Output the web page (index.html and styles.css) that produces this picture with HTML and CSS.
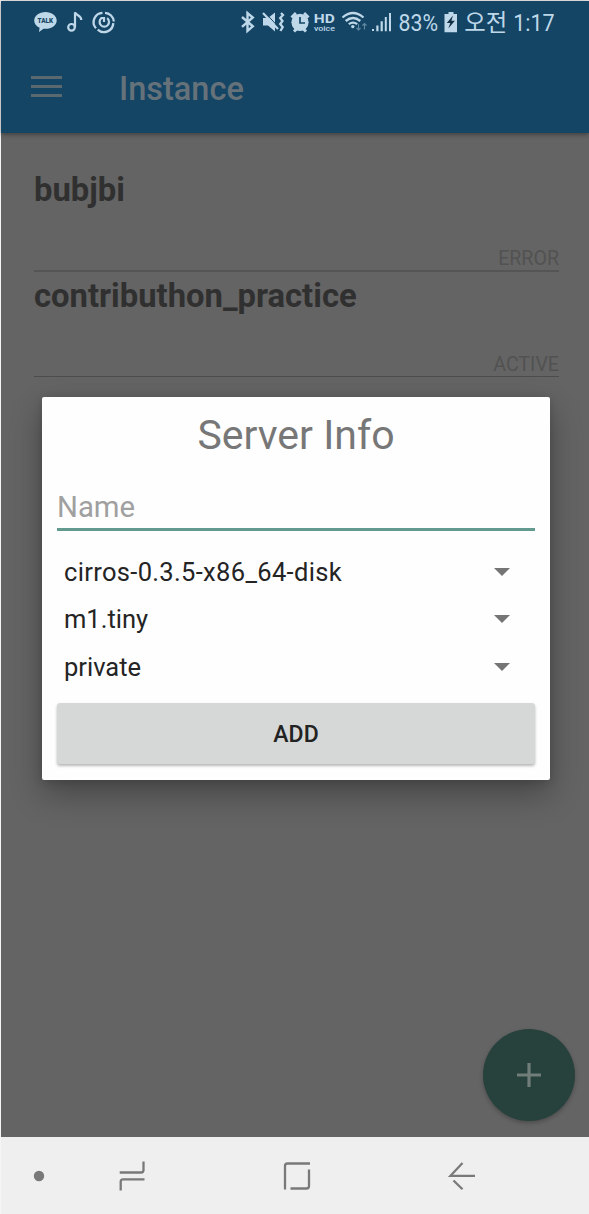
FILE: index.html
```
<!DOCTYPE html>
<html lang="ko">
<head>
<meta charset="utf-8">
<title>Instance</title>
<link rel="stylesheet" href="styles.css">
</head>
<body>
<div class="phone">
  <header class="top">
    <div class="status">
      <svg class="si talk" width="24" height="24" viewBox="34 10 24 24"><path fill="currentColor" d="M45.500 12c6.200 0 11.200 3.700 11.200 8.500s-5 8.300-11.200 8.300c-.6 0-1.300 0-2 -.1l-4.500 3.400.6-4.300c-3.300-1.500-5.400-4.200-5.400-7.300 0-4.800 5-8.500 11.300-8.500z"/><text class="talk-text" x="37.600" y="23.200" textLength="15.500" lengthAdjust="spacingAndGlyphs">TALK</text></svg>
      <svg class="si note" width="18" height="24" viewBox="66 10 18 24"><g fill="none" stroke="currentColor" stroke-width="2.200"><circle cx="71.500" cy="27.300" r="3.300"/><path d="M75 27.300V12.300c1 3.200 6.500 3.200 6.300 7.700"/></g></svg>
      <svg class="si ring" width="24" height="24" viewBox="92 10 24 24"><g fill="none" stroke="currentColor"><path stroke-width="2.300" d="M102.500 12.800a9.300 9.300 0 0 0-6.500 15.500M97.700 29.600a9.300 9.300 0 0 0 15.600-6.500M113.800 21.500a9.300 9.300 0 0 0-8.800-8.700"/><path stroke-width="2.200" d="M101.500 18.200a4.700 4.700 0 1 0 5.600 0M100.500 18h3.500v4"/></g></svg>
      <span class="grow"></span>
      <svg class="si bt" width="16" height="24" viewBox="240 10 16 24"><path fill="none" stroke="currentColor" stroke-width="2.400" d="M242 17l10.800 9.300-5.300 4.600V13l5.300 4.500L242 26.800"/></svg>
      <svg class="si mute" width="24" height="24" viewBox="261 10 24 24"><path fill="currentColor" d="M263 18h5l7-5.500v19l-7-6h-5z"/><path stroke="#154565" stroke-width="1" d="M265 12.500l13 14"/><path stroke="currentColor" stroke-width="2.200" d="M263 13l15 16"/><path fill="none" stroke="currentColor" stroke-width="2.300" d="M281 13l2 2-2.800 3 2.300 3-2.300 3 2.500 3-2.300 4"/></svg>
      <svg class="si alarm" width="22" height="24" viewBox="289 10 22 24"><circle cx="300" cy="22.300" r="8.600" fill="currentColor"/><path fill="none" stroke="currentColor" stroke-width="3" d="M291.500 17.500l4.500-4.300M308.500 17.500l-4.500-4.300M294 31.500l3-3M306 31.500l-3-3"/><path fill="none" stroke="#154565" stroke-width="1.700" d="M300 17v6h5"/></svg>
      <svg class="si hd" width="23" height="24" viewBox="313 10 23 24"><text class="hd-text" x="313.800" y="22.700" textLength="21" lengthAdjust="spacingAndGlyphs">HD</text><text class="voice-text" x="314" y="31" textLength="21" lengthAdjust="spacingAndGlyphs">voice</text></svg>
      <svg class="si wifi" width="27" height="24" viewBox="341 10 27 24"><g fill="none" stroke="currentColor" stroke-width="2.300"><path d="M342.500 17.500q10.500-9 21 0M345.700 21q7.300-6 14.600 0M348.800 24.200q4.200-3.200 8.400 0"/></g><circle cx="352.800" cy="26.600" r="1.700" fill="currentColor"/><g class="dim" fill="none" stroke="currentColor" stroke-width="1.200"><path d="M358.500 24v6M356.500 28l2 2 2-2M364.500 29.500v-6M362.500 25.500l2-2 2 2"/></g></svg>
      <svg class="si signal" width="22" height="24" viewBox="371 10 22 24"><path fill="currentColor" d="M372 29h2v2h-2zM376.300 25.500h2.200v5.700h-2.200zM380.600 21.300h2.200v9.900h-2.200zM384.800 17h2v14.200h-2zM389 13h2v18.200h-2z"/></svg>
      <svg class="si pct" width="42" height="24" viewBox="398 10 42 24"><text class="st" x="398.500" y="31" textLength="39.500" lengthAdjust="spacingAndGlyphs">83%</text></svg>
      <svg class="si batt" width="14" height="24" viewBox="444 10 14 24"><path fill="currentColor" d="M448.500 12h5v2h3.500v18.300h-12.500V14h4z"/><path fill="#102f45" d="M453 15.500l-6.200 7.500h3.500l-2 5.500 6.600-7.700h-3.500z"/></svg>
      <svg class="si ampm" width="44" height="28" viewBox="464 8 44 28"><text class="st ko" x="464.300" y="30.700" textLength="43" lengthAdjust="spacingAndGlyphs">오전</text></svg>
      <svg class="si time" width="43" height="24" viewBox="513 10 43 24"><text class="st" x="513.200" y="31" textLength="41.500" lengthAdjust="spacingAndGlyphs">1:17</text></svg>
    </div>
    <div class="toolbar">
      <div class="menu"><i></i><i></i><i></i></div>
      <h1>Instance</h1>
    </div>
  </header>
  <main class="content">
    <section class="server">
      <h2>bubjbi</h2>
      <p>ERROR</p>
    </section>
    <section class="server">
      <h2>contributhon_practice</h2>
      <p>ACTIVE</p>
    </section>
    <div class="fab"><svg width="26" height="26" viewBox="0 0 26 26"><path stroke="#707d78" stroke-width="3.200" d="M13 1v24M1 13h24"/></svg></div>
  </main>
  <div class="dialog">
    <div class="dtitle"><span>Server Info</span></div>
    <div class="field">Name</div>
    <div class="row"><span class="image-name">cirros-0.3.5-x86_64-disk</span><i class="arrow"></i></div>
    <div class="row"><span>m1.tiny</span><i class="arrow"></i></div>
    <div class="row"><span>private</span><i class="arrow"></i></div>
    <div class="add"><span>ADD</span></div>
  </div>
  <nav class="nav">
    <svg width="588" height="77" viewBox="1 1137 588 77"><circle cx="39" cy="1176" r="5.200" fill="#797979"/><g fill="none" stroke="#797979" stroke-width="2.300"><path d="M119.700 1172.500H141q2.500 0 2.500-2.500v-8.500M144.500 1179.300H123q-2.300 0-2.300 2.500v8.700M310 1163.500h-22.500q-2.500 0-2.500 2.500v23.500M309 1169.500v16.500q0 2.500-2.500 2.500H290.500M475 1175.800H450.500l12-12.800M453.500 1180.500l9 8.800"/></g></svg>
  </nav>
</div>
</body>
</html>
```

FILE: styles.css
```
body {
  margin: 0;
  background: #f5f5f5;
  font-family: Roboto, "Noto Sans CJK KR", sans-serif;
}
h1, h2, p { margin: 0; }
.phone {
  position: relative;
  display: flex;
  flex-direction: column;
  box-sizing: border-box;
  width: 589px;
  height: 1214px;
  padding: 1px 0 0 1px;
  overflow: hidden;
  white-space: nowrap;
}
.top {
  position: relative;
  z-index: 1;
  height: 132px;
  background: #154565;
  box-shadow: 0 1px 5px rgba(0, 0, 0, .45);
}
.status {
  display: flex;
  align-items: center;
  height: 42px;
  padding: 0 33px;
  color: #bed8e9;
}
.si { flex: none; overflow: visible; }
.note { margin-left: 8px; }
.ring { margin-left: 8px; }
.grow { flex: 1; }
.mute { margin-left: 5px; }
.alarm { margin-left: 4px; }
.hd { margin-left: 2px; }
.wifi { margin-left: 5px; }
.signal { margin-left: 3px; }
.pct { margin-left: 5px; }
.batt { margin-left: 4px; }
.ampm { margin-left: 6px; }
.time { margin-left: 5px; }
.dim { opacity: .45; }
.st { fill: currentColor; font-size: 24.500px; }
.ko { font-family: "Noto Sans CJK KR", sans-serif; font-size: 24px; }
.talk-text { fill: #154565; font-size: 7.500px; font-weight: 900; }
.hd-text { fill: currentColor; font-size: 13px; font-weight: 700; }
.voice-text { fill: currentColor; font-size: 7.500px; font-weight: 500; }
.toolbar {
  display: flex;
  align-items: center;
  height: 90px;
  padding-left: 30px;
}
.menu {
  display: flex;
  flex-direction: column;
  gap: 6px;
  width: 31px;
  margin-right: 57px;
  padding-bottom: 3px;
}
.menu i { height: 3px; background: #5a6870; }
h1 {
  padding-top: 1px;
  color: #66727a;
  font-size: 32.500px;
  font-weight: 500;
  line-height: 90px;
}
.content {
  position: relative;
  height: 1004px;
  box-sizing: border-box;
  padding: 32px 30px 0 33px;
  background: #646464;
}
.server {
  display: flex;
  flex-direction: column;
  justify-content: space-between;
  height: 105px;
  border-bottom: 2px solid #555;
}
.server + .server {
  height: 104px;
  border-bottom: 1px solid #4c4c4c;
}
h2 {
  color: #303030;
  font-size: 32.800px;
  font-weight: 700;
  line-height: 50px;
}
.server + .server h2 { line-height: 48px; }
.server p {
  color: #525252;
  font-size: 19.600px;
  line-height: 22px;
  text-align: right;
}
.fab {
  position: absolute;
  right: 14px;
  bottom: 16.500px;
  display: flex;
  align-items: center;
  justify-content: center;
  width: 92px;
  height: 92px;
  border-radius: 50%;
  background: #27413c;
  box-shadow: 0 2px 4px rgba(0, 0, 0, .25);
}
.dialog {
  position: absolute;
  z-index: 2;
  left: 42px;
  top: 397px;
  width: 508px;
  height: 383px;
  box-sizing: border-box;
  padding: 0 15px;
  border-radius: 2px;
  background: #fefefe;
  box-shadow: 0 14px 32px rgba(0, 0, 0, .3), 0 2px 10px rgba(0, 0, 0, .15);
}
.dtitle {
  height: 75px;
  color: #777;
  font-size: 41px;
  line-height: 77px;
  text-align: center;
}
.field {
  height: 56px;
  border-bottom: 3px solid #639a8f;
  color: #a0a0a0;
  font-size: 29.300px;
  line-height: 70px;
}
.row {
  display: flex;
  align-items: center;
  justify-content: space-between;
  height: 47.500px;
  padding: 0 25px 0 7px;
  color: #242424;
  font-size: 25.500px;
}
.image-name { letter-spacing: .33px; }
.field + .row { margin-top: 17px; }
.arrow {
  border: 8px solid transparent;
  border-top-color: #757575;
  border-bottom: 0;
}
.add {
  height: 61px;
  margin-top: 12px;
  border-radius: 3px;
  background: #d6d8d7;
  box-shadow: 0 2px 3px rgba(0, 0, 0, .28);
  color: #222;
  font-size: 23px;
  font-weight: 500;
  line-height: 63px;
  text-align: center;
}
.nav { height: 77px; background: #efefef; }
.nav svg { display: block; }
```
